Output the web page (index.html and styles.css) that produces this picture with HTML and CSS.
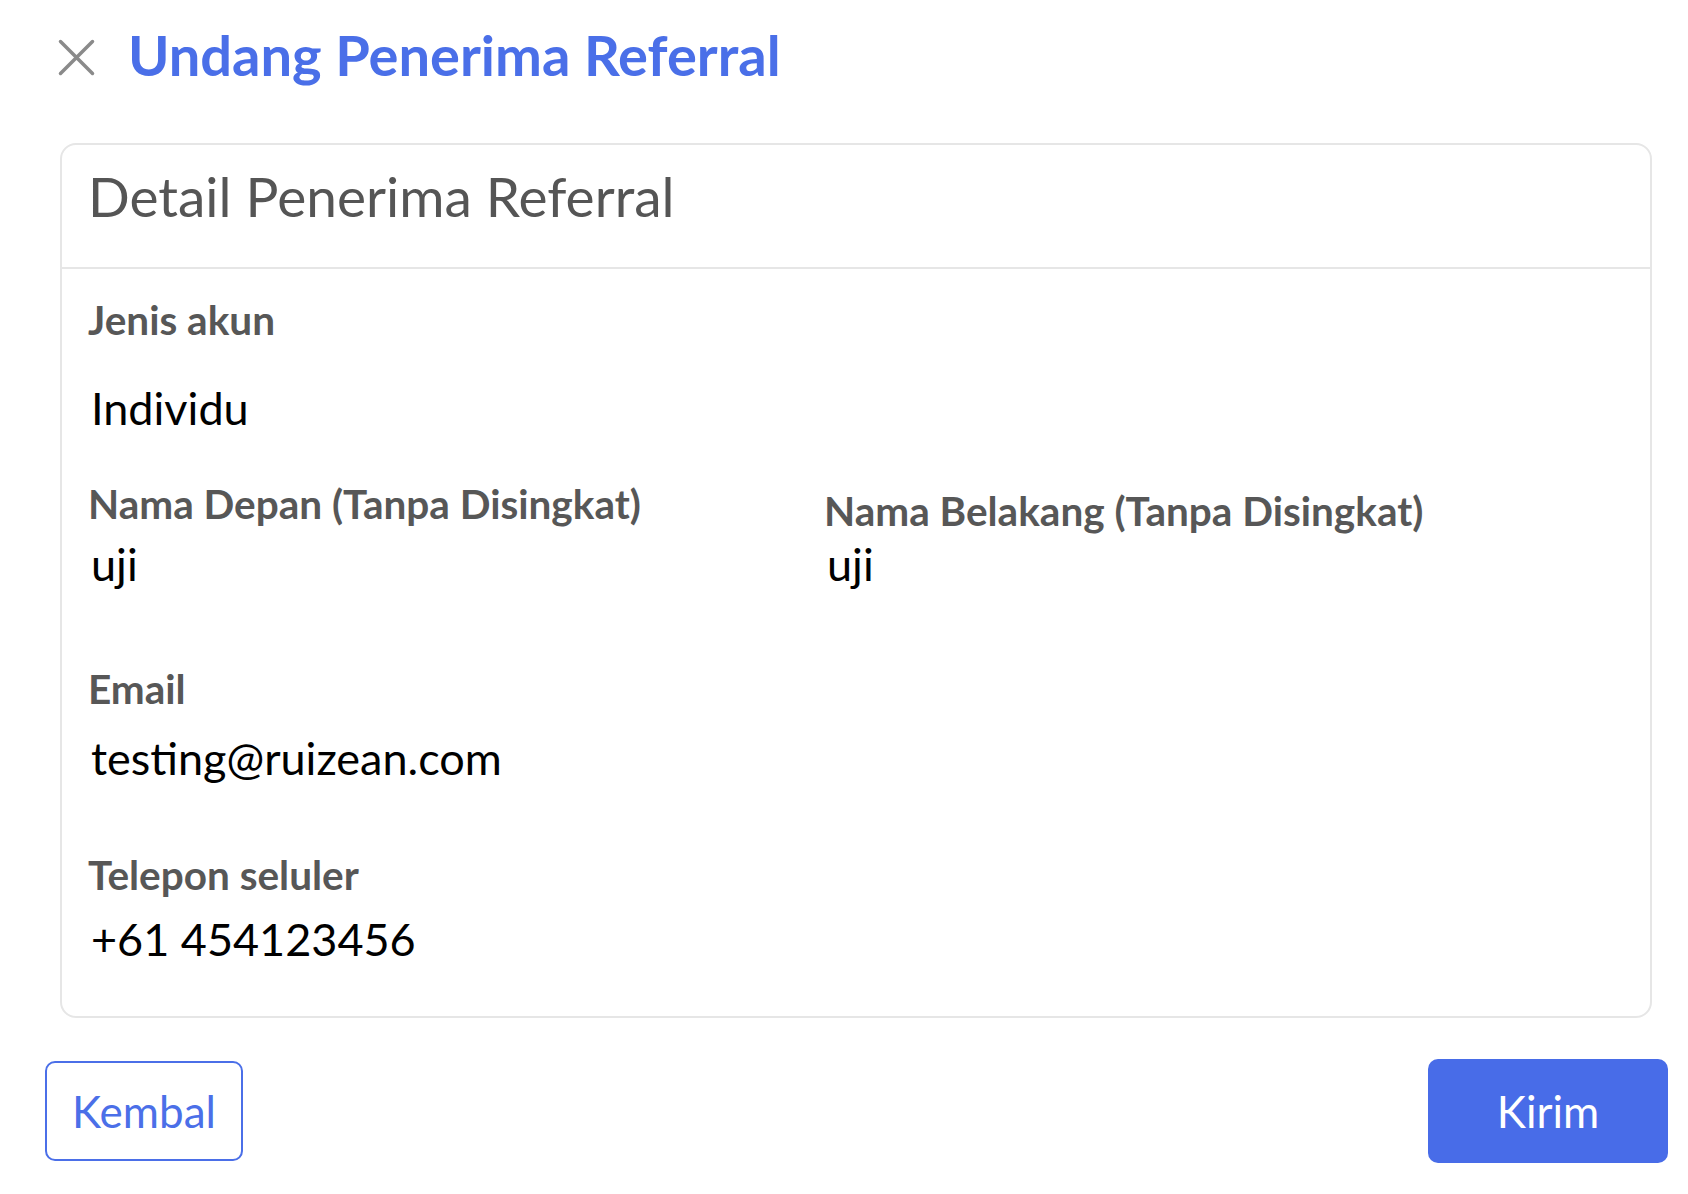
FILE: index.html
```html
<!DOCTYPE html>
<html>
<head>
  <title>Undang Penerima Referral</title>
  <link rel="stylesheet" href="styles.css">
</head>
<body>
  <div class="topbar">
    <svg class="close-icon" width="37" height="37" viewBox="0 0 37 37">
      <path d="M2.5 2.5 L34.5 34.5 M34.5 2.5 L2.5 34.5" stroke="#8a8a8a" stroke-width="3.5" stroke-linecap="round" fill="none"/>
    </svg>
    <h1 class="title">Undang Penerima Referral</h1>
  </div>

  <div class="card">
    <div class="card-head">Detail Penerima Referral</div>
    <div class="card-body">
      <div class="field">
        <div class="label">Jenis akun</div>
        <div class="value value-account">Individu</div>
      </div>

      <div class="name-row">
        <div class="field">
          <div class="label label-first">Nama Depan (Tanpa Disingkat)</div>
          <div class="value">uji</div>
        </div>
        <div class="field">
          <div class="label label-last">Nama Belakang (Tanpa Disingkat)</div>
          <div class="value">uji</div>
        </div>
      </div>

      <div class="field field-email">
        <div class="label">Email</div>
        <div class="value value-email">testing@ruizean.com</div>
      </div>

      <div class="field field-phone">
        <div class="label">Telepon seluler</div>
        <div class="value value-phone">+61 454123456</div>
      </div>
    </div>
  </div>

  <div class="actions">
    <button class="btn btn-outline">Kembal</button>
    <button class="btn btn-primary">Kirim</button>
  </div>
</body>
</html>
```

FILE: styles.css
```css
body {
  margin: 0;
  background-color: #ffffff;
  font-family: Lato, "Open Sans", sans-serif;
}

.topbar {
  display: flex;
  align-items: center;
  gap: 33px;
  height: 53px;
  margin: 28px 0 0 58px;
}

.close-icon {
  margin-top: 5px;
  flex-shrink: 0;
}

.title {
  margin: 0;
  font-size: 56px;
  line-height: 53px;
  font-weight: 700;
  color: #4a6fe8;
}

.card {
  margin: 62px 36px 0 60px;
  border: 2px solid #e6e6e6;
  border-radius: 16px;
}

.card-head {
  padding: 21px 26px 41px;
  border-bottom: 2px solid #e6e6e6;
  font-size: 55px;
  line-height: 60px;
  color: #555555;
}

.card-body {
  padding: 28px 26px 49px;
}

.label {
  font-size: 40.5px;
  line-height: 46px;
  font-weight: 700;
  color: #575757;
}

.value {
  padding-left: 3px;
  font-size: 45px;
  line-height: 56px;
  color: #000000;
}

.value-account {
  margin-top: 37px;
}

.name-row {
  display: grid;
  grid-template-columns: 736px 1fr;
  margin-top: 45px;
}

.label-first {
  margin-bottom: 9px;
}

.label-last {
  margin-top: 7px;
  margin-bottom: 2px;
}

.field-email {
  margin-top: 74px;
}

.value-email {
  margin-top: 18px;
}

.field-phone {
  margin-top: 66px;
}

.value-phone {
  margin-top: 13px;
}

.actions {
  display: flex;
  justify-content: space-between;
  align-items: center;
  margin: 41px 20px 0 45px;
}

.btn {
  box-sizing: border-box;
  font-family: Lato, "Open Sans", sans-serif;
  font-size: 44px;
  border-radius: 10px;
  cursor: pointer;
}

.btn-outline {
  width: 198px;
  height: 100px;
  border: 2px solid #4b6fe8;
  background-color: #ffffff;
  color: #4b6fe8;
}

.btn-primary {
  width: 240px;
  height: 104px;
  border: none;
  background-color: #486ce8;
  color: #ffffff;
}
```
